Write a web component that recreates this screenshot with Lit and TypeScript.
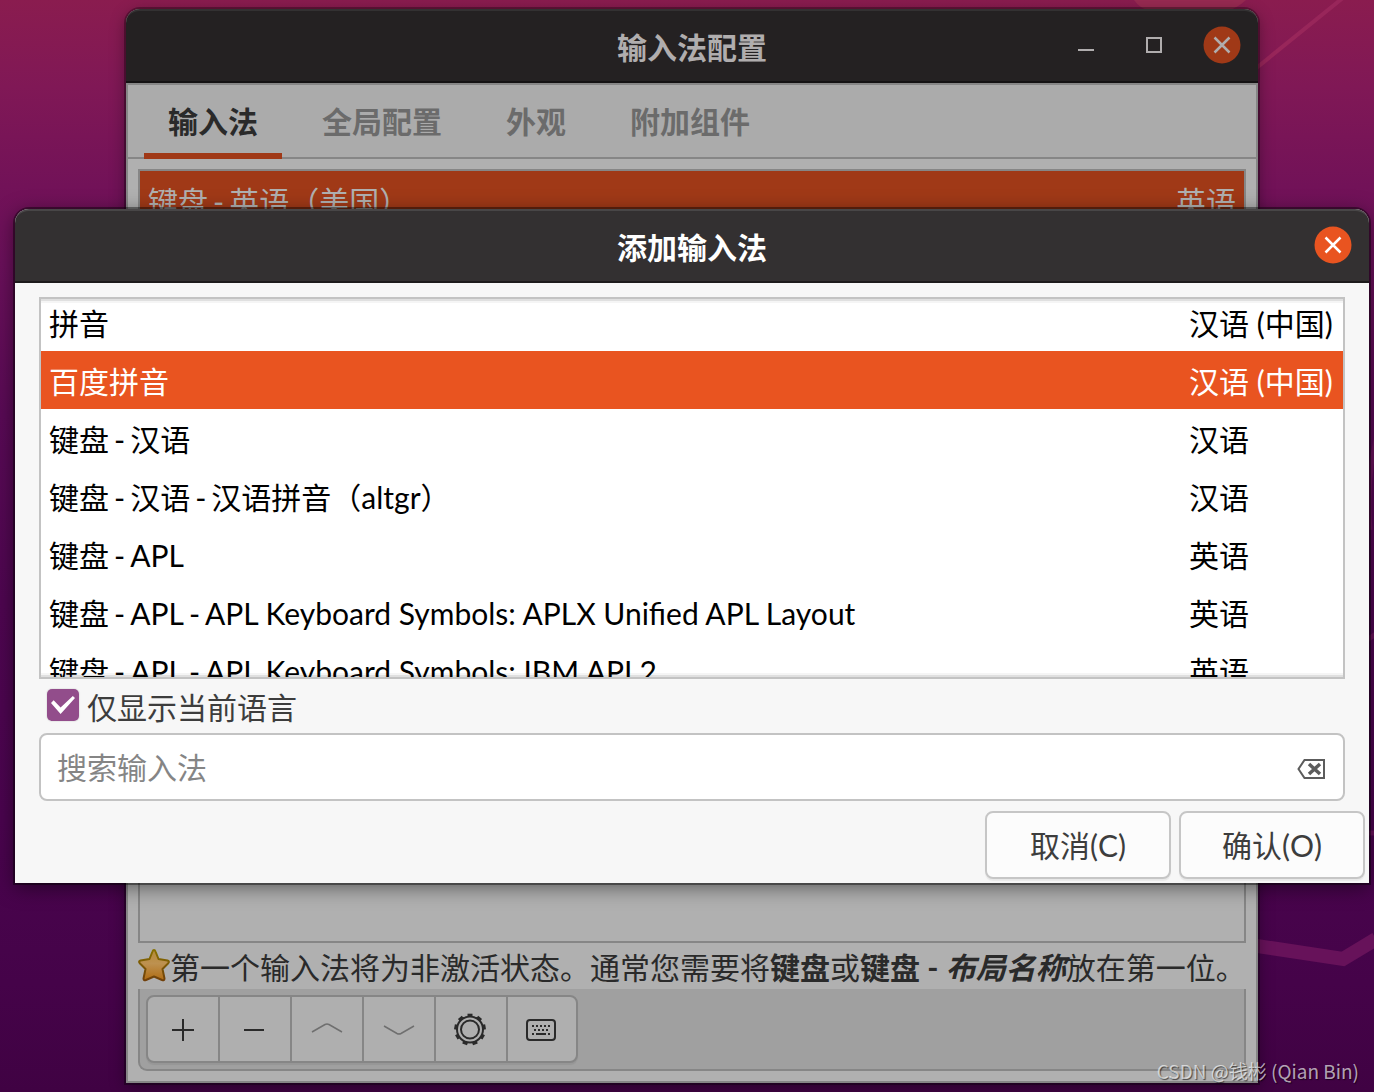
import { LitElement, html, svg, css } from "lit";
import { customElement, state, query } from "lit/decorators.js";

interface Method {
  name: string[];
  language: string;
}

const METHODS: Method[] = [
  { name: ["拼音"], language: "汉语 (中国)" },
  { name: ["百度拼音"], language: "汉语 (中国)" },
  { name: ["键盘", "汉语"], language: "汉语" },
  { name: ["键盘", "汉语", "汉语拼音（altgr）"], language: "汉语" },
  { name: ["键盘", "APL"], language: "英语" },
  { name: ["键盘", "APL", "APL Keyboard Symbols: APLX Unified APL Layout"], language: "英语" },
  { name: ["键盘", "APL", "APL Keyboard Symbols: IBM APL2"], language: "英语" },
];

const TABS = ["输入法", "全局配置", "外观", "附加组件"];

const GEAR_TEETH = Array.from({ length: 9 }, (_, i) => i * 40);

const toolIcons = {
  add: svg`<path d="M7 18H29M18 7V29" stroke-width="2"/>`,
  remove: svg`<path d="M7 18H27" stroke-width="2"/>`,
  up: svg`<path d="M3 20L16 12.500Q18 11.500 20 12.500L33 20" stroke-width="1.500"/>`,
  down: svg`<path d="M3 14L16 21.500Q18 22.500 20 21.500L33 14" stroke-width="1.500"/>`,
  gear: svg`
    <circle cx="17" cy="17.500" r="13" stroke-width="2"/>
    <circle cx="17" cy="17.500" r="9" stroke-width="2"/>
    ${GEAR_TEETH.map((a) => svg`<path d="M14.500 3.200H19.500" stroke-width="3" transform="rotate(${a} 17 17.500)"/>`)}`,
  keyboard: svg`
    <rect x="3" y="8" width="28" height="20" rx="3" stroke-width="2"/>
    <path d="M8 14H27" stroke-width="2" stroke-dasharray="2 2"/>
    <path d="M10 18H25" stroke-width="2" stroke-dasharray="2 2"/>
    <path d="M8 22H10M12 22H22M24 22H26" stroke-width="2"/>`,
};

const closeIcon = html`<svg viewBox="0 0 38 38" width="38" height="38" aria-hidden="true">
  <circle class="disc" cx="19" cy="19" r="18.500" />
  <path d="M11.500 11.500L26.500 26.500M26.500 11.500L11.500 26.500" fill="none" stroke="currentColor" stroke-width="2.500" />
</svg>`;

const methodName = (parts: string[]) =>
  html`<span class="name">${parts.map((part, i) => html`${i ? html`<span> - </span>` : ""}<span>${part}</span>`)}</span>`;

const shared = css`
  :host {
    display: block;
    box-sizing: border-box;
    font-size: 30px;
    line-height: 44px;
  }
  *,
  *::before,
  *::after {
    box-sizing: border-box;
  }
  button,
  input {
    font: inherit;
    color: inherit;
    margin: 0;
  }
  button {
    cursor: pointer;
  }
  .titlebar {
    display: grid;
    grid-template-columns: 1fr auto 1fr;
    height: 74px;
    flex: none;
    border-radius: 14px 14px 0 0;
    border-top: 2px solid var(--bar-edge);
    border-bottom: 2px solid var(--bar-line);
    background: var(--bar);
    color: var(--bar-text);
  }
  .title {
    grid-column: 2;
    margin: 0;
    padding-top: 14px;
    font-size: 30px;
    line-height: 44px;
    font-weight: 700;
  }
  .controls {
    display: flex;
    justify-content: flex-end;
    gap: 30px;
    padding: 15px 17px 0 0;
  }
  .control {
    width: 38px;
    height: 38px;
    padding: 0;
    border: 0;
    background: none;
    line-height: 0;
  }
  .disc {
    fill: var(--accent);
  }
  table {
    width: 100%;
    border-collapse: collapse;
    table-layout: fixed;
  }
  td {
    height: 58px;
    padding: 2px 8px 0;
    white-space: nowrap;
  }
  .name {
    display: flex;
    align-items: baseline;
    gap: 5px;
  }
  .selected {
    background: var(--accent);
    color: var(--accent-text);
  }
`;

@customElement("config-window")
class ConfigWindow extends LitElement {
  static styles = [
    shared,
    css`
      :host {
        --bar: #242122;
        --bar-edge: #333132;
        --bar-line: #141213;
        --bar-text: #b0adae;
        --accent: #a03917;
        --accent-text: #b0b0b0;
        display: flex;
        flex-direction: column;
        border-radius: 14px 14px 0 0;
        background: #b0b0b0;
        color: #2a2a2a;
        box-shadow: 0 0 0 2px rgba(0, 0, 0, 0.3), 0 4px 16px rgba(0, 0, 0, 0.4);
      }
      .frame {
        flex: 1;
        display: flex;
        flex-direction: column;
        border: 2px solid #868686;
      }
      .tabs {
        display: flex;
        gap: 16px;
        height: 74px;
        padding: 0 16px;
        border-bottom: 2px solid #868686;
        background: #ababab;
      }
      .tab {
        height: 74px;
        padding: 4px 24px 0;
        border: 0;
        border-bottom: 6px solid transparent;
        background: none;
        font-weight: 700;
        color: #6b6b6b;
      }
      .tab.active {
        color: #2a2a2a;
        border-bottom-color: var(--accent);
      }
      .page {
        flex: 1;
        display: flex;
        flex-direction: column;
        padding: 10px;
      }
      .list {
        flex: 1;
        border: 2px solid #868686;
      }
      .language {
        width: 76px;
      }
      .hint {
        display: flex;
        height: 46px;
        margin: 0;
        white-space: nowrap;
      }
      .star {
        flex: none;
        margin-top: 5px;
      }
      .hint-text {
        padding-top: 2px;
      }
      .toolbar {
        padding: 6px;
        border: 2px solid #868686;
        border-top: 0;
        border-radius: 0 0 9px 9px;
        background: #a0a0a0;
      }
      .group {
        display: inline-flex;
        vertical-align: top;
        border: 2px solid #868686;
        border-radius: 8px;
        background: #afafaf;
        box-shadow: 0 2px 1px rgba(0, 0, 0, 0.06);
      }
      .tool {
        width: 72px;
        height: 64px;
        padding: 2px 0 0;
        border: 0;
        border-right: 2px solid #868686;
        background: none;
        line-height: 0;
        color: #2a2a2a;
      }
      .tool:last-child {
        width: 68px;
        border-right: 0;
      }
      .tool:disabled {
        color: #6f6f6f;
      }
    `,
  ];

  @state() private tab = 0;

  private tool(label: string, icon: unknown, disabled = false) {
    return html`<button class="tool" aria-label=${label} ?disabled=${disabled}>
      <svg width="36" height="36" viewBox="0 0 36 36" fill="none" stroke="currentColor">${icon}</svg>
    </button>`;
  }

  render() {
    return html`
      <header class="titlebar">
        <h1 class="title">输入法配置</h1>
        <div class="controls">
          <button class="control" aria-label="最小化">
            <svg width="38" height="38" viewBox="0 0 38 38"><path d="M11 24H27" stroke="currentColor" stroke-width="2" /></svg>
          </button>
          <button class="control" aria-label="最大化">
            <svg width="38" height="38" viewBox="0 0 38 38"><rect x="12" y="12" width="14" height="14" fill="none" stroke="currentColor" stroke-width="2" /></svg>
          </button>
          <button class="control" aria-label="关闭">${closeIcon}</button>
        </div>
      </header>
      <div class="frame">
        <nav class="tabs" role="tablist">
          ${TABS.map(
            (name, i) => html`<button
              class="tab ${i === this.tab ? "active" : ""}"
              role="tab"
              aria-selected=${i === this.tab}
              @click=${() => (this.tab = i)}
            >${name}</button>`
          )}
        </nav>
        <section class="page">
          <div class="list">
            <table>
              <tbody>
                <tr class="selected">
                  <td>${methodName(["键盘", "英语（美国）"])}</td>
                  <td class="language">英语</td>
                </tr>
              </tbody>
            </table>
          </div>
          <p class="hint">
            <svg class="star" width="32" height="34" viewBox="0 0 32 34" aria-hidden="true">
              <defs>
                <linearGradient id="gold" x1="0" y1="0" x2="0" y2="1">
                  <stop offset="0" stop-color="#b58b38" />
                  <stop offset="0.450" stop-color="#bd9150" />
                  <stop offset="1" stop-color="#b06c12" />
                </linearGradient>
                <linearGradient id="rim" x1="0" y1="0" x2="0" y2="1">
                  <stop offset="0" stop-color="#877000" />
                  <stop offset="1" stop-color="#71400a" />
                </linearGradient>
              </defs>
              <path
                d="M16 2Q17 2 17.500 3.500L20.500 11L29.500 12.500Q32 13.500 30 15.500L24.500 21L26.500 30.500Q26.500 33 24 32L16 28.500L8 32Q5.500 33 5.500 30.500L7.500 21L2 15.500Q0 13.500 2.500 12.500L11.500 11L14.500 3.500Q15 2 16 2Z"
                fill="url(#gold)"
                stroke="url(#rim)"
                stroke-width="2"
                stroke-linejoin="round"
              />
            </svg>
            <span class="hint-text">第一个输入法将为非激活状态。通常您需要将<b>键盘</b>或<b>键盘 - <i>布局名称</i></b>放在第一位。</span>
          </p>
          <div class="toolbar">
            <div class="group">
              ${this.tool("添加", toolIcons.add)} ${this.tool("移除", toolIcons.remove)}
              ${this.tool("上移", toolIcons.up, true)} ${this.tool("下移", toolIcons.down, true)}
              ${this.tool("配置", toolIcons.gear)} ${this.tool("键盘布局", toolIcons.keyboard)}
            </div>
          </div>
        </section>
      </div>
    `;
  }
}

@customElement("add-dialog")
class AddDialog extends LitElement {
  static styles = [
    shared,
    css`
      :host {
        --bar: #333031;
        --bar-edge: #484647;
        --bar-line: #1e1b1c;
        --bar-text: #ffffff;
        --accent: #e95420;
        --accent-text: #ffffff;
        border-radius: 14px 14px 0 0;
        background: #f7f7f7;
        color: #3d3d3d;
        box-shadow: 0 0 0 2px rgba(0, 0, 0, 0.4), 0 4px 20px rgba(0, 0, 0, 0.5);
      }
      .content {
        padding: 14px 24px 0;
      }
      .list {
        position: relative;
        border: 2px solid #c3c3c3;
        background: #ffffff;
        color: #000000;
      }
      .list::before,
      .list::after {
        content: "";
        position: absolute;
        left: 0;
        right: 0;
        height: 4px;
        pointer-events: none;
      }
      .list::before {
        top: 0;
        background: linear-gradient(rgba(0, 0, 0, 0.12) 50%, rgba(0, 0, 0, 0.04) 50%);
      }
      .list::after {
        bottom: 0;
        background: linear-gradient(rgba(0, 0, 0, 0.04) 50%, rgba(0, 0, 0, 0.12) 50%);
      }
      .scroller {
        height: 378px;
        overflow: hidden;
      }
      .language {
        width: 162px;
      }
      .only {
        display: flex;
        gap: 8px;
        height: 54px;
        padding: 0 8px;
      }
      .check {
        appearance: none;
        width: 32px;
        height: 32px;
        margin: 10px 0 0;
        border-radius: 5px;
        background: #ffffff;
        box-shadow: 0 0 1px 1px rgba(0, 0, 0, 0.06);
        display: grid;
      }
      .check:checked {
        background: #924d8b;
      }
      .check:checked::before {
        content: "";
        width: 24px;
        height: 18px;
        margin: 7px 4px;
        background: #ffffff;
        clip-path: polygon(0 39%, 11% 23%, 40% 64%, 91% 0, 100% 11%, 40% 100%);
      }
      .only-label {
        padding-top: 6px;
      }
      .search {
        display: flex;
        align-items: center;
        height: 68px;
        padding: 0 16px;
        border: 2px solid #c3c3c3;
        border-radius: 8px;
        background: #ffffff;
      }
      .query {
        flex: 1;
        min-width: 0;
        height: 60px;
        padding: 0;
        border: 0;
        outline: 0;
        background: none;
      }
      .query::placeholder {
        color: #858585;
        opacity: 1;
      }
      .clear {
        width: 30px;
        height: 28px;
        padding: 0;
        border: 0;
        background: none;
        line-height: 0;
        color: #5c5c5c;
      }
      .actions {
        display: flex;
        justify-content: flex-end;
        gap: 8px;
        padding: 10px 4px 4px;
      }
      .action {
        width: 186px;
        height: 68px;
        padding: 0;
        border: 2px solid #c6c6c6;
        border-radius: 8px;
        background: #fcfcfc;
        box-shadow: 0 2px 1px rgba(0, 0, 0, 0.06);
      }
    `,
  ];

  @state() private selected = 1;
  @query(".scroller") private scroller!: HTMLElement;
  @query(".query") private search!: HTMLInputElement;

  firstUpdated() {
    this.scroller.scrollTop = 6;
  }

  render() {
    return html`
      <header class="titlebar">
        <h2 class="title">添加输入法</h2>
        <div class="controls">
          <button class="control" aria-label="关闭">${closeIcon}</button>
        </div>
      </header>
      <div class="content">
        <div class="list">
          <div class="scroller">
            <table>
              <tbody>
                ${METHODS.map(
                  (m, i) => html`<tr class=${i === this.selected ? "selected" : ""} @click=${() => (this.selected = i)}>
                    <td>${methodName(m.name)}</td>
                    <td class="language">${m.language}</td>
                  </tr>`
                )}
              </tbody>
            </table>
          </div>
        </div>
        <div class="only">
          <input class="check" id="only" type="checkbox" checked />
          <label class="only-label" for="only">仅显示当前语言</label>
        </div>
        <div class="search">
          <input class="query" type="text" aria-label="搜索输入法" placeholder="搜索输入法" />
          <button class="clear" aria-label="清除" @click=${() => (this.search.value = "")}>
            <svg width="30" height="28" viewBox="0 0 30 28" fill="none" stroke="currentColor">
              <path d="M27 7V25H7.500L1.500 16L7.500 7Z" stroke-width="2" />
              <path d="M12 11L23 21M23 11L12 21" stroke-width="3.500" />
            </svg>
          </button>
        </div>
      </div>
      <footer class="actions">
        <button class="action">取消(C)</button>
        <button class="action">确认(O)</button>
      </footer>
    `;
  }
}

@customElement("app-root")
class AppRoot extends LitElement {
  static styles = css`
    :host {
      display: block;
      font-family: Lato, "Noto Sans CJK SC", sans-serif;
    }
    .desktop {
      position: relative;
      display: flex;
      box-sizing: border-box;
      min-height: 100vh;
      padding: 9px 116px 9px 126px;
      overflow: hidden;
      background: linear-gradient(#8a1c4f 0%, #801856 8%, #721258 17%, #6a105a 24%, #590a55 38%, #4e0650 55%, #4a044e 75%, #450349 90%, #400243 100%);
    }
    .wallpaper {
      position: absolute;
      top: 0;
      right: 0;
    }
    .main {
      position: relative;
      flex: 1;
      min-width: 0;
    }
    .dialog {
      position: absolute;
      top: 209px;
      left: 15px;
      right: 5px;
    }
    .watermark {
      position: absolute;
      right: 15px;
      bottom: 6px;
      font: 19px/30px "Noto Sans CJK SC", sans-serif;
      color: rgba(255, 255, 255, 0.65);
      text-shadow: 1px 1px 1px rgba(0, 0, 0, 0.6);
    }
  `;

  render() {
    return html`
      <main class="desktop">
        <svg class="wallpaper" width="260" height="1092" viewBox="0 0 260 1092" fill="none" aria-hidden="true">
          <path d="M20 0H132Q115 16 76 20Q30 16 20 0Z" fill="#982a52" />
          <path d="M130 78L230 -3" stroke="#98265a" stroke-width="4" />
          <path d="M262 440Q252 480 256 530M250 642L262 634M250 833H262" stroke="#67125a" stroke-width="5" />
          <path d="M130 944L229 959L262 939" stroke="#67125a" stroke-width="14" />
        </svg>
        <config-window class="main"></config-window>
        <add-dialog class="dialog"></add-dialog>
        <span class="watermark">CSDN @钱彬 (Qian Bin)</span>
      </main>
    `;
  }
}
